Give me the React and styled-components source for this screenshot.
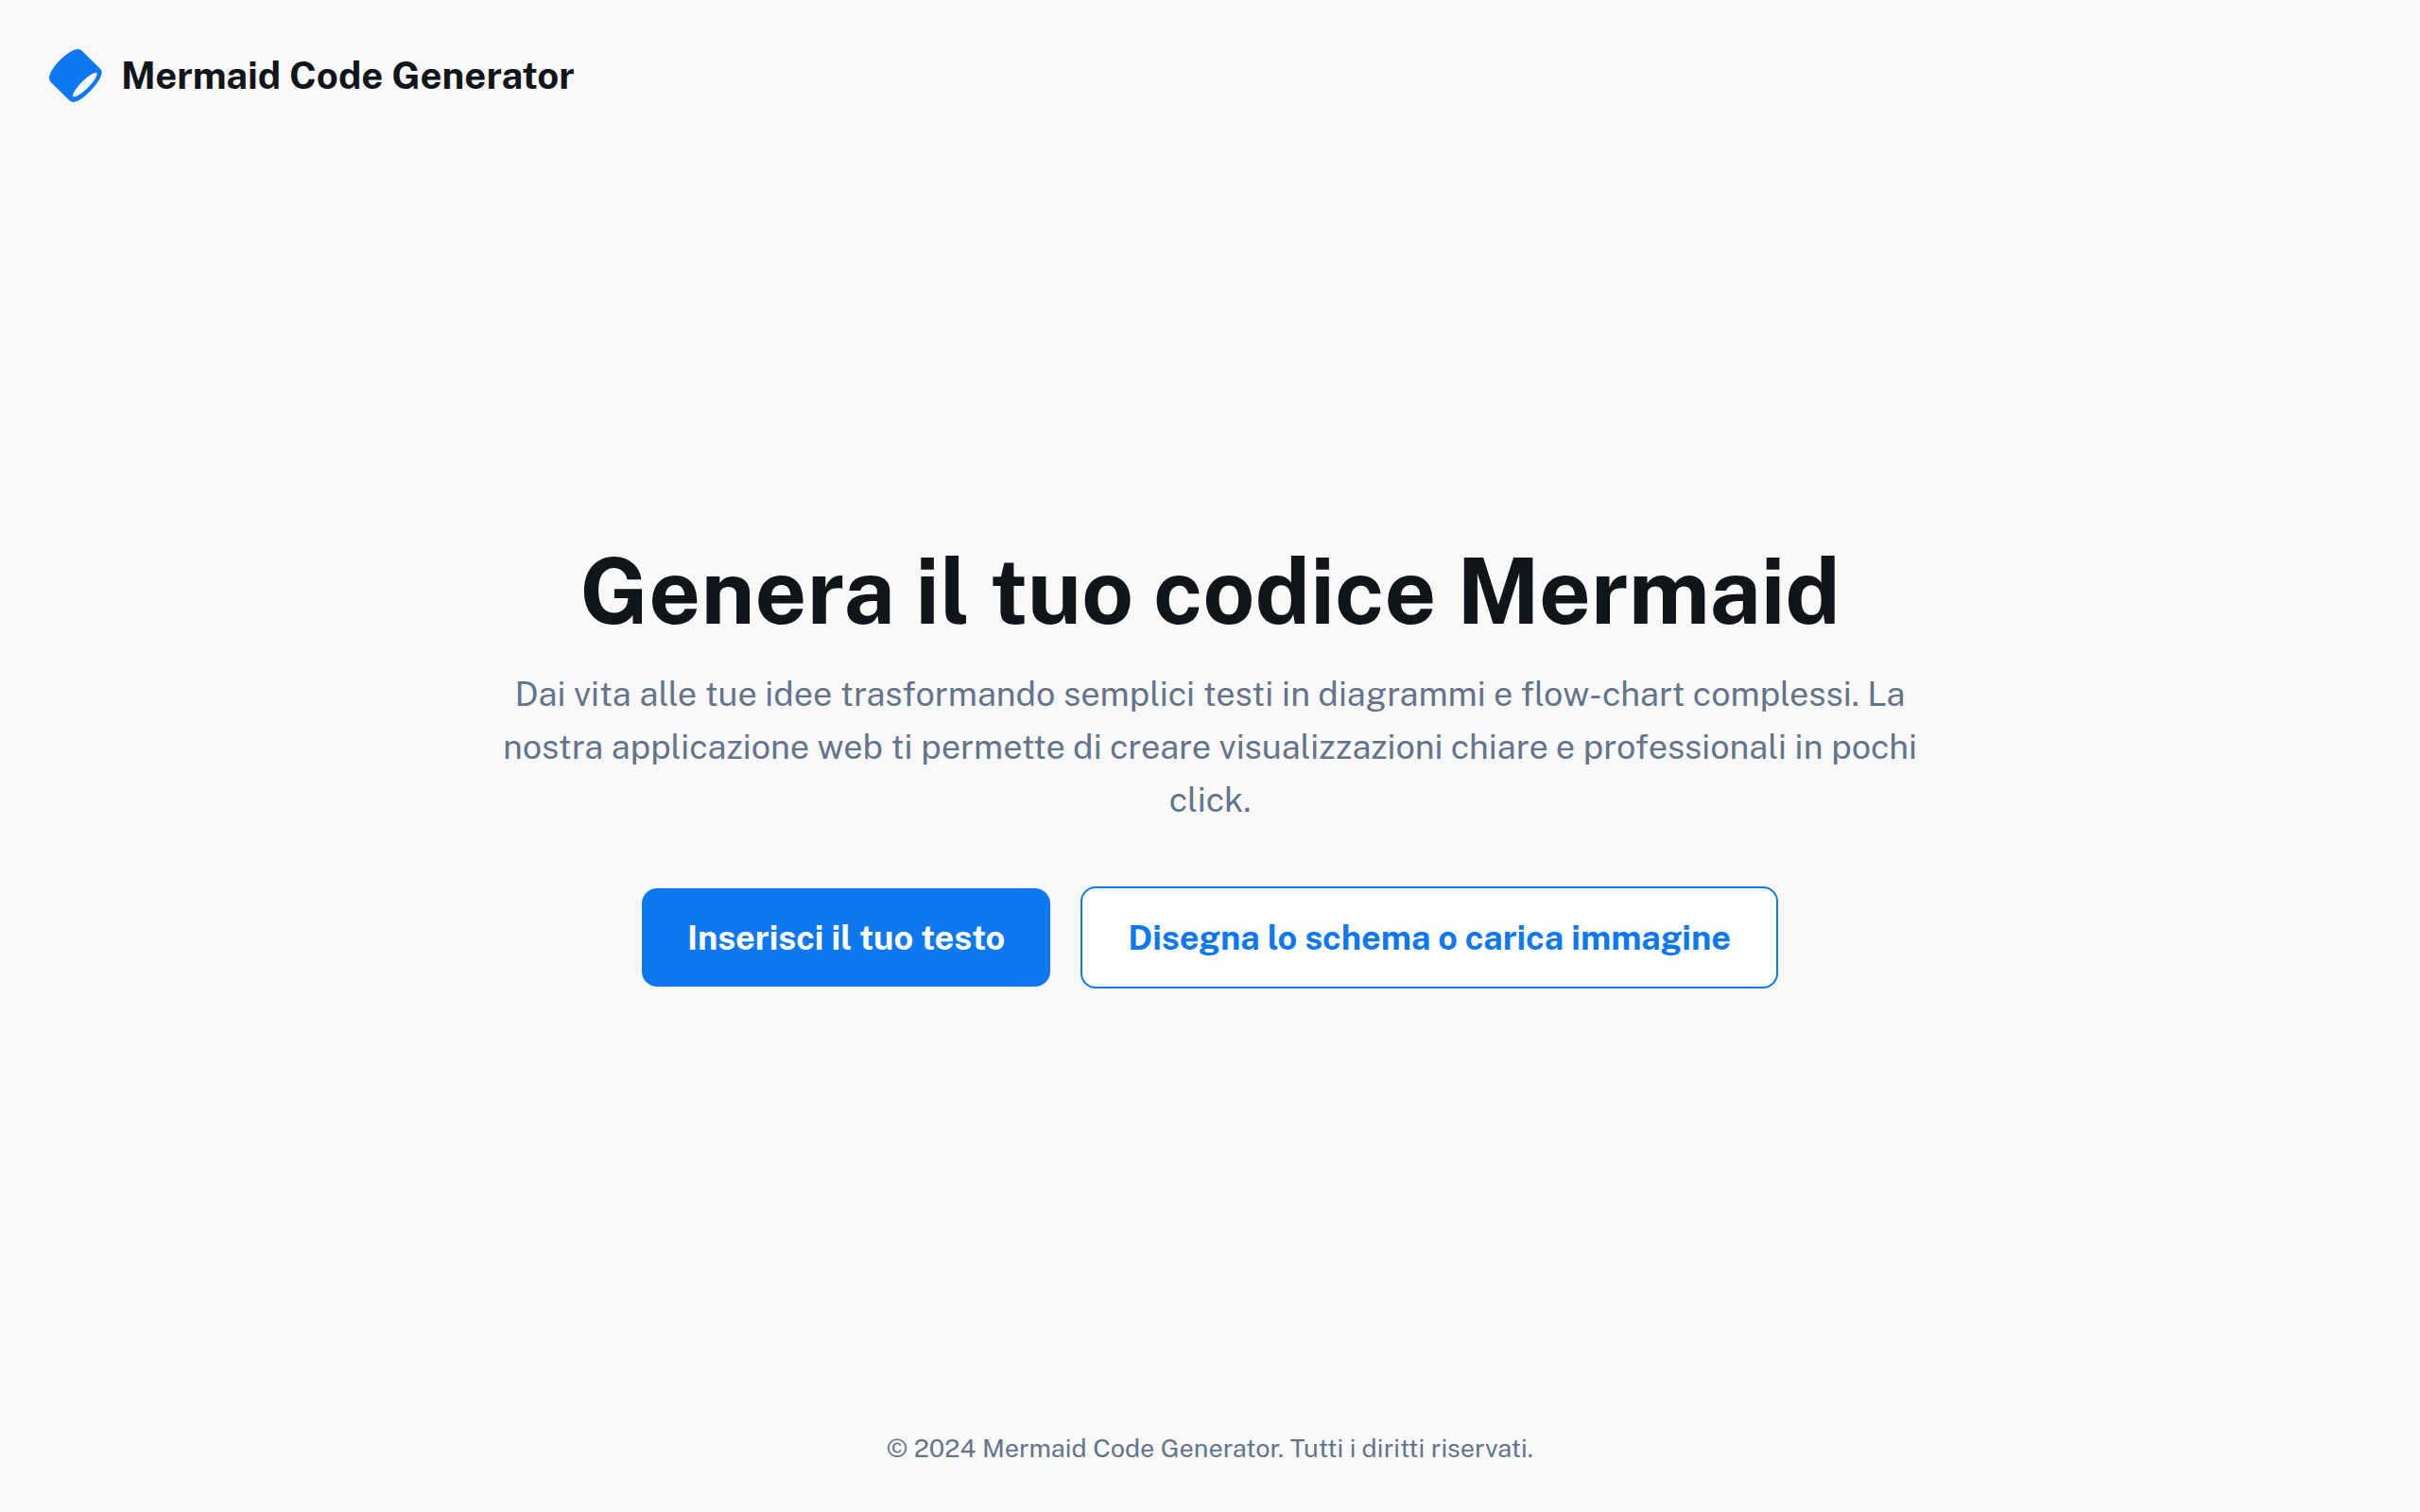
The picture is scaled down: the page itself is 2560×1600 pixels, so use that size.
import React from "react";
import styled, { createGlobalStyle, css } from "styled-components";

const color = {
  background: "#f9f9f9",
  surface: "#ffffff",
  primary: "#0d78f2",
  heading: "#111418",
  muted: "#64748b",
};

const GlobalStyle = createGlobalStyle`
  *,
  *::before,
  *::after {
    box-sizing: border-box;
  }

  body {
    margin: 0;
    background: ${color.background};
    color: ${color.heading};
    font-family: "Public Sans", Inter, "Liberation Sans", sans-serif;
  }
`;

const Page = styled.div`
  display: flex;
  flex-direction: column;
  min-height: 100vh;
`;

const Header = styled.header`
  padding: 48px;
`;

const Brand = styled.div`
  display: flex;
  align-items: center;
  gap: 16px;
`;

const BrandMark = styled.svg`
  flex: none;
  width: 64px;
  height: 64px;
  color: ${color.primary};
`;

const BrandName = styled.h2`
  margin: 0;
  font-size: 40px;
  font-weight: 700;
  line-height: 56px;
`;

const Main = styled.main`
  flex: 1;
  display: flex;
  align-items: center;
  justify-content: center;
  padding: 0 48px;
`;

const Hero = styled.section`
  max-width: 1536px;
  text-align: center;
`;

const Title = styled.h1`
  margin: 0;
  font-size: 96px;
  font-weight: 700;
  line-height: 96px;
`;

const Lead = styled.p`
  margin: 32px 0 0;
  color: ${color.muted};
  font-size: 36px;
  line-height: 56px;
`;

const Actions = styled.div`
  display: flex;
  flex-wrap: wrap;
  align-items: center;
  justify-content: center;
  gap: 32px;
  margin-top: 64px;
`;

const Button = styled.button`
  padding: 24px 48px;
  border: 0;
  border-radius: 16px;
  background: ${color.primary};
  color: ${color.surface};
  font-family: inherit;
  font-size: 36px;
  font-weight: 700;
  line-height: 56px;
  cursor: pointer;

  ${({ $outlined }) =>
    $outlined &&
    css`
      border: 2px solid ${color.primary};
      background: ${color.surface};
      color: ${color.primary};
    `}
`;

const Footer = styled.footer`
  padding: 48px;
  color: ${color.muted};
  font-size: 27px;
  line-height: 40px;
  text-align: center;
`;

const Copyright = styled.p`
  margin: 0;
`;

function Logo() {
  return (
    <BrandMark viewBox="0 0 192 192" fill="currentColor" aria-hidden="true">
      <path
        fillRule="evenodd"
        d="M101 12 Q110 11 116 17 L174 74 Q180 80 179 88 C176 106 160 128 143 145 C125 163 106 178 90 180 Q82 181 76 175 L18 118 Q11 111 12 101 C15 83 31 62 46 47 C62 31 83 15 101 12 Z M163 87 C154 84 132 100 116 116 C99 134 85 153 87 162 C95 167 118 151 135 134 C152 117 168 95 163 87 Z"
      />
    </BrandMark>
  );
}

export default function App() {
  return (
    <>
      <GlobalStyle />
      <Page>
        <Header>
          <Brand>
            <Logo />
            <BrandName>Mermaid Code Generator</BrandName>
          </Brand>
        </Header>
        <Main>
          <Hero>
            <Title>Genera il tuo codice Mermaid</Title>
            <Lead>
              Dai vita alle tue idee trasformando semplici testi in diagrammi e
              flow-chart complessi. La nostra applicazione web ti permette di
              creare visualizzazioni chiare e professionali in pochi click.
            </Lead>
            <Actions>
              <Button type="button">Inserisci il tuo testo</Button>
              <Button type="button" $outlined>
                Disegna lo schema o carica immagine
              </Button>
            </Actions>
          </Hero>
        </Main>
        <Footer>
          <Copyright>
            © 2024 Mermaid Code Generator. Tutti i diritti riservati.
          </Copyright>
        </Footer>
      </Page>
    </>
  );
}
